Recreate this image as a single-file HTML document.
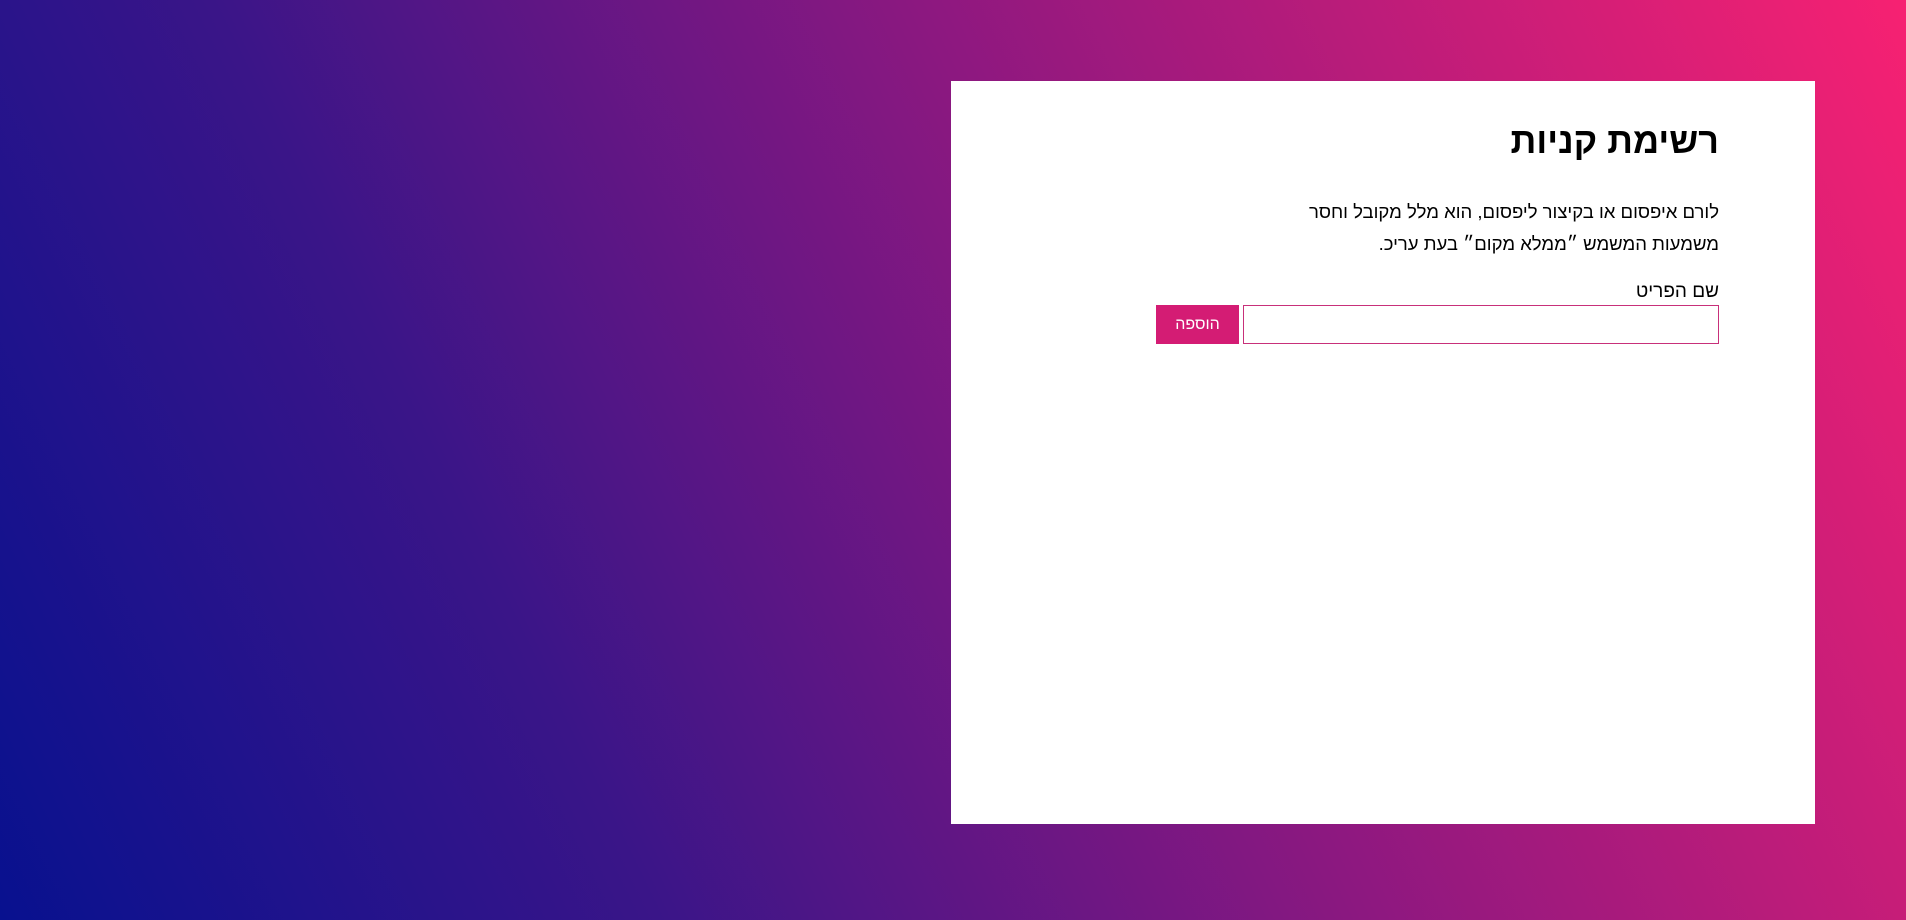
<!DOCTYPE html>
<html lang="he" dir="rtl">
<head>
<meta charset="utf-8">
<style>
html,body{margin:0;padding:0;width:1906px;height:920px;overflow:hidden;}
body{background:linear-gradient(64deg,#08118f 0%,#3a1588 28%,#8c1880 58%,#f72172 100%);font-family:"Liberation Sans","DejaVu Sans",sans-serif;position:relative;}
.card{position:absolute;left:951px;top:81px;width:864px;height:743px;background:#fff;}
h1{position:absolute;right:96px;top:35px;margin:0;font-size:36px;font-weight:bold;color:#000;line-height:50px;}
p{position:absolute;right:96px;top:115px;margin:0;font-size:18.5px;line-height:32px;color:#000;width:440px;}
.label{position:absolute;right:96px;top:198px;font-size:19px;line-height:26px;color:#000;}
.input{position:absolute;right:96px;top:224px;width:474px;height:37px;border:1px solid #c8307a;box-sizing:content-box;}
.btn{position:absolute;left:205px;top:224px;width:83px;height:39px;background:#d41c74;color:#fff;font-size:16px;line-height:39px;text-align:center;}
</style>
</head>
<body>
<div class="card">
<h1>רשימת קניות</h1>
<p>לורם איפסום או בקיצור ליפסום, הוא מלל מקובל וחסר משמעות המשמש ״ממלא מקום״ בעת עריכ.</p>
<div class="label">שם הפריט</div>
<div class="input"></div>
<div class="btn">הוספה</div>
</div>
</body>
</html>
